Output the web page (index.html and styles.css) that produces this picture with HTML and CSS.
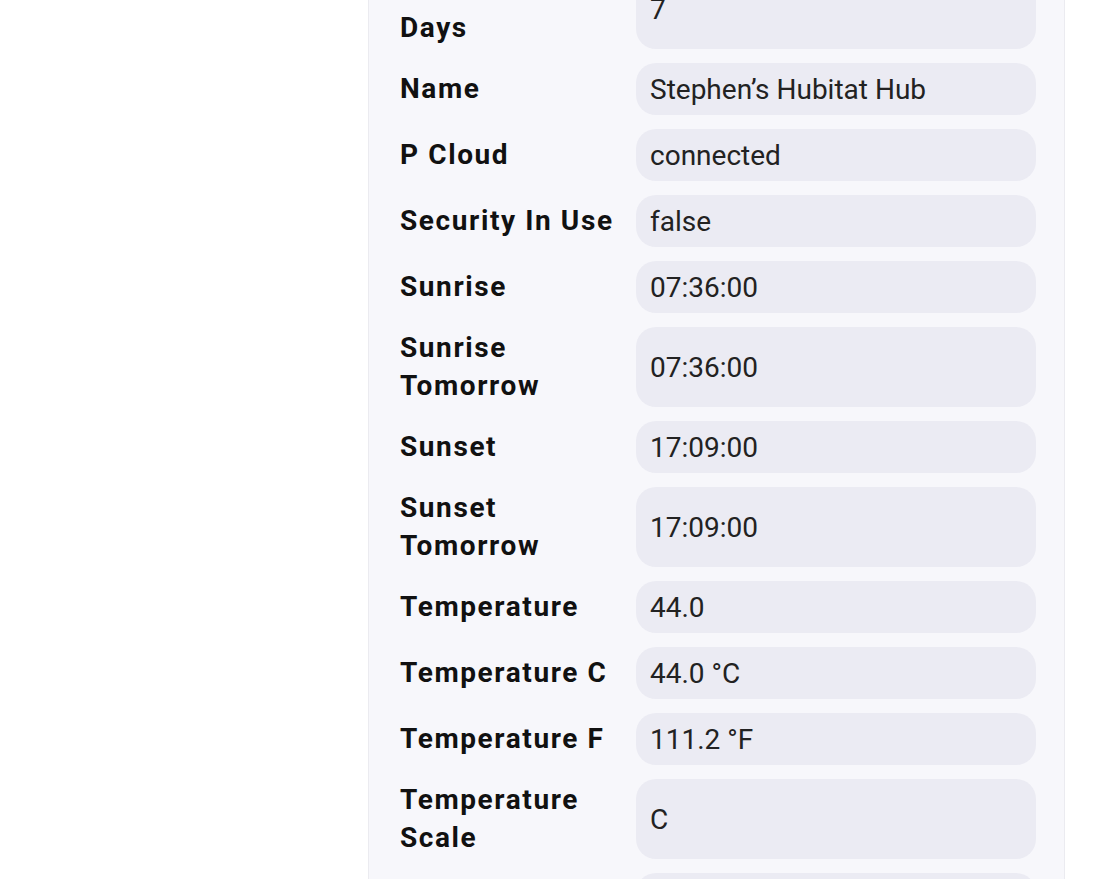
FILE: index.html
```html
<!DOCTYPE html>
<html lang="en">
<head>
<meta charset="utf-8">
<title>Hub Details</title>
<link rel="stylesheet" href="styles.css">
</head>
<body>
<main class="page">
  <section class="card">
    <div class="row"><div class="label">Alert Timeout Days</div><div class="value">7</div></div>
    <div class="row"><div class="label">Name</div><div class="value">Stephen’s Hubitat Hub</div></div>
    <div class="row"><div class="label">P Cloud</div><div class="value">connected</div></div>
    <div class="row"><div class="label">Security In Use</div><div class="value">false</div></div>
    <div class="row"><div class="label">Sunrise</div><div class="value">07:36:00</div></div>
    <div class="row"><div class="label">Sunrise Tomorrow</div><div class="value">07:36:00</div></div>
    <div class="row"><div class="label">Sunset</div><div class="value">17:09:00</div></div>
    <div class="row"><div class="label">Sunset Tomorrow</div><div class="value">17:09:00</div></div>
    <div class="row"><div class="label">Temperature</div><div class="value">44.0</div></div>
    <div class="row"><div class="label">Temperature C</div><div class="value">44.0 °C</div></div>
    <div class="row"><div class="label">Temperature F</div><div class="value">111.2 °F</div></div>
    <div class="row"><div class="label">Temperature Scale</div><div class="value">C</div></div>
    <div class="row"><div class="label">Time Zone</div><div class="value">America/New_York</div></div>
  </section>
</main>
</body>
</html>
```
FILE: styles.css
```css
html, body {
  margin: 0;
  padding: 0;
  background: #ffffff;
  overflow: hidden;
}
body {
  font-family: Roboto, "Liberation Sans", sans-serif;
  height: 879px;
}
.page {
  padding-left: 368px;
}
.card {
  width: 697px;
  box-sizing: border-box;
  margin-top: -31px;
  background: #f7f7fb;
  border: 1px solid #ebebf0;
  border-top: none;
  padding: 0 28px 40px 31px;
  display: flex;
  flex-direction: column;
  gap: 14px;
}
.row {
  display: grid;
  grid-template-columns: 222px 1fr;
  column-gap: 14px;
  min-height: 52px;
}
.label {
  font-weight: 700;
  font-size: 28px;
  line-height: 38px;
  letter-spacing: 1.6px;
  color: #111111;
  padding: 2px 0;
  align-self: center;
}
.value {
  background: #ebebf3;
  border-radius: 20px;
  font-size: 28px;
  color: #222222;
  padding: 0 14px;
  display: flex;
  align-items: center;
  min-height: 52px;
}
```
